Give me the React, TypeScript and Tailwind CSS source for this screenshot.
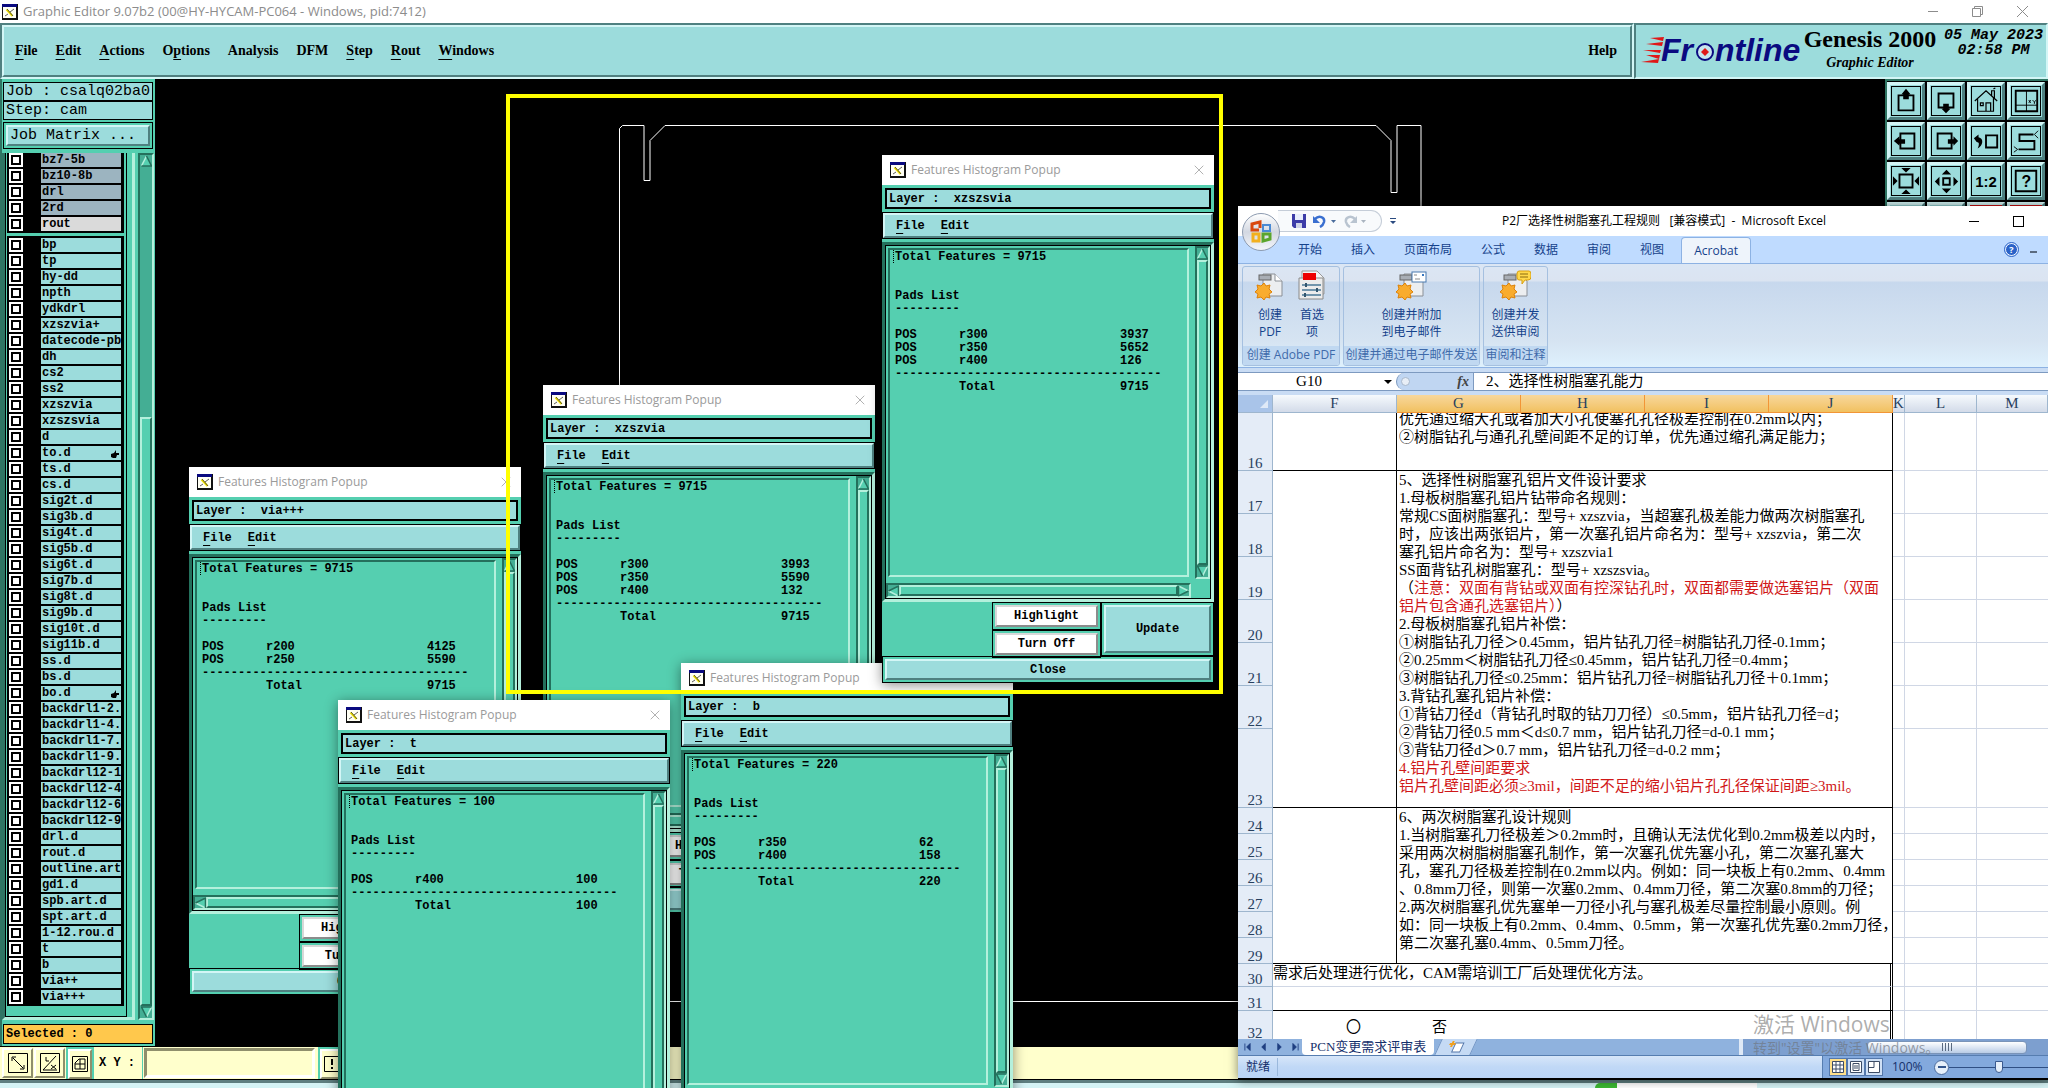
import React, { useState } from 'react';
import clsx from 'clsx';
import { X } from 'lucide-react';

const MONO = "font-['Liberation_Mono',monospace]";
const UI = "font-['Open_Sans','Noto_Sans_CJK_SC',sans-serif]";
const SHEET = "font-['Liberation_Serif','Noto_Sans_CJK_SC',serif]";

// Motif style bevels
const RAISED = 'border-2 border-t-[#d3f6f6] border-l-[#d3f6f6] border-b-[#4f8080] border-r-[#4f8080]';
const SUNKEN = 'border-2 border-t-[#4f8080] border-l-[#4f8080] border-b-[#d3f6f6] border-r-[#d3f6f6]';
const GREEN_RAISED = 'border-2 border-t-[#b4f0dc] border-l-[#b4f0dc] border-b-[#24705c] border-r-[#24705c]';
const GREEN_SUNKEN = 'border-2 border-t-[#24705c] border-l-[#24705c] border-b-[#b4f0dc] border-r-[#b4f0dc]';

const mainMenu = [
  ['File', 0], ['Edit', 0], ['Actions', 0], ['Options', 1], ['Analysis', -1],
  ['DFM', -1], ['Step', 0], ['Rout', 0], ['Windows', 0],
] as [string, number][];

const drillLayers = ['bz7-5b', 'bz10-8b', 'drl', '2rd', 'rout'];
const layers = [
  'bp', 'tp', 'hy-dd', 'npth', 'ydkdrl', 'xzszvia+', 'datecode-pbd', 'dh', 'cs2', 'ss2', 'xzszvia', 'xzszsvia',
  'd', 'to.d', 'ts.d', 'cs.d', 'sig2t.d', 'sig3b.d', 'sig4t.d', 'sig5b.d', 'sig6t.d', 'sig7b.d', 'sig8t.d',
  'sig9b.d', 'sig10t.d', 'sig11b.d', 'ss.d', 'bs.d', 'bo.d', 'backdrl1-2.d', 'backdrl1-4.d', 'backdrl1-7.d',
  'backdrl1-9.d', 'backdrl12-11', 'backdrl12-4', 'backdrl12-6', 'backdrl12-9', 'drl.d', 'rout.d', 'outline.art',
  'gd1.d', 'spb.art.d', 'spt.art.d', '1-12.rou.d', 't', 'b', 'via++', 'via+++',
];

interface PopupData {
  layer: string;
  total: number;
  pads: [string, number][];
  place: string;
}

const popups: PopupData[] = [
  { layer: 'via+++', total: 9715, pads: [['r200', 4125], ['r250', 5590]], place: 'left-[189px] top-[467px]' },
  { layer: 'xzszvia', total: 9715, pads: [['r300', 3993], ['r350', 5590], ['r400', 132]], place: 'left-[543px] top-[385px]' },
  { layer: 'b', total: 220, pads: [['r350', 62], ['r400', 158]], place: 'left-[681px] top-[663px]' },
  { layer: 'xzszsvia', total: 9715, pads: [['r300', 3937], ['r350', 5652], ['r400', 126]], place: 'left-[882px] top-[155px]' },
  { layer: 't', total: 100, pads: [['r400', 100]], place: 'left-[338px] top-[700px]' },
];

function MenuLabel({ text, mark }: { text: string; mark: number }) {
  if (mark < 0) return <>{text}</>;
  return (
    <>
      {text.slice(0, mark)}
      <span className="underline underline-offset-4 decoration-1">{text[mark]}</span>
      {text.slice(mark + 1)}
    </>
  );
}

function AppIcon() {
  return (
    <svg className="w-4 h-4 shrink-0" viewBox="0 0 16 16">
      <rect width="16" height="16" fill="#111" />
      <rect x="0" y="0" width="15" height="3" fill="#0a0a80" />
      <rect x="1" y="3" width="13" height="11" fill="#fffff4" />
      <path d="M4.500 5.500l6 6.500" stroke="#f0e000" strokeWidth="2" />
      <path d="M3 12l3-2M8 8l4-3M5 5l6 7" stroke="#333" strokeWidth=".8" fill="none" />
    </svg>
  );
}

function Arrow({ dir }: { dir: 'up' | 'down' | 'left' | 'right' }) {
  const rot = { up: 'rotate-0', down: 'rotate-180', left: '-rotate-90', right: 'rotate-90' }[dir];
  return (
    <svg className={clsx('w-[11px] h-3 shrink-0 block', rot)} viewBox="0 0 11 12">
      <path d="M5.5 1L10.5 11H.5z" fill="#55cfb0" />
      <path d="M5.5 1L.5 11" stroke="#b4f0dc" strokeWidth="1.5" />
      <path d="M5.5 1l5 10H.5" stroke="#24705c" strokeWidth="1.5" fill="none" />
    </svg>
  );
}

function HistogramPopup({ data }: { data: PopupData }) {
  return (
    <section className={clsx('absolute w-[332px] h-[528px] bg-[#55cfb0] shadow-[0_2px_12px_rgba(0,0,0,0.45)]', data.place)}>
      <div className={clsx('h-[30px] bg-white flex items-center pl-2 pr-[7px]', UI)}>
        <AppIcon />
        <h2 className="ml-[5px] text-[12px] text-[#9a9a9a] flex-1">Features Histogram Popup</h2>
        <button aria-label="Close window"><X className="w-4 h-4 text-[#8a8a8a]" strokeWidth={1} /></button>
      </div>
      <div className={clsx('pt-[3px] font-bold text-[12px] text-black', MONO)}>
        <div className="mx-[3px] h-[21px] border-2 border-black bg-[#9cdcdc] pl-[2px] leading-[19px] whitespace-pre">
          {`Layer :  ${data.layer}`}
        </div>
        <div className="mt-[3px] h-[27px] border border-black">
          <div className={clsx('h-full bg-[#9cdcdc] flex items-center gap-4 pl-[11px]', RAISED)}>
            <button><MenuLabel text="File" mark={0} /></button>
            <button><MenuLabel text="Edit" mark={0} /></button>
          </div>
        </div>
        <div className="mt-[3px] h-[360px] border-[3px] border-t-[#24705c] border-l-[#24705c] border-b-[#b4f0dc] border-r-[#b4f0dc]">
          <div className="h-full border border-black grid grid-cols-[305px_15px] grid-rows-[333px_15px] gap-1">
            <div className={clsx('m-[2px] leading-[13px] relative pt-px pl-[5px]', GREEN_SUNKEN)}>
              <span className="absolute left-[3px] top-0 h-[13px] border-l border-dotted border-black" />
              <p>Total Features = {data.total}</p>
              <p className="mt-[26px]">Pads List</p>
              <p>---------</p>
              <table className="mt-[13px] table-fixed w-[265px] text-left">
                <colgroup>
                  <col className="w-16" />
                  <col className="w-[161px]" />
                  <col />
                </colgroup>
                <tbody>
                  {data.pads.map(([name, count]) => (
                    <tr key={name}>
                      <td className="p-0">POS</td>
                      <td className="p-0">{name}</td>
                      <td className="p-0">{count}</td>
                    </tr>
                  ))}
                  <tr>
                    <td colSpan={3} className="p-0 whitespace-nowrap">{'-'.repeat(37)}</td>
                  </tr>
                  <tr>
                    <td className="p-0" />
                    <td className="p-0">Total</td>
                    <td className="p-0">{data.total}</td>
                  </tr>
                </tbody>
              </table>
            </div>
            <div className={clsx('bg-[#44ae94] flex flex-col items-center', GREEN_SUNKEN)}>
              <Arrow dir="up" />
              <div className={clsx('flex-1 w-full bg-[#55cfb0]', GREEN_RAISED)} />
              <Arrow dir="down" />
            </div>
            <div className={clsx('bg-[#44ae94] flex items-center', GREEN_SUNKEN)}>
              <Arrow dir="left" />
              <div className={clsx('flex-1 h-full bg-[#55cfb0]', GREEN_RAISED)} />
              <Arrow dir="right" />
            </div>
          </div>
        </div>
        <div className="h-[54px] flex justify-end">
          <div className="w-[109px] flex flex-col">
            {['Highlight', 'Turn Off'].map(label => (
              <div key={label} className="flex-1 border border-black p-[2px]">
                <button className="w-full h-full block bg-white border-2 border-t-[#d8d8d8] border-l-[#d8d8d8] border-b-[#8c8c8c] border-r-[#8c8c8c]">
                  {label}
                </button>
              </div>
            ))}
          </div>
          <div className="w-[113px] border border-black p-[2px]">
            <button className={clsx('w-full h-full block bg-[#9cdcdc]', RAISED)}>Update</button>
          </div>
        </div>
        <div className="h-[27px] border border-black p-[2px]">
          <button className={clsx('w-full h-full block bg-[#9cdcdc]', RAISED)}>Close</button>
        </div>
      </div>
    </section>
  );
}

function LayerRow({ name, tone }: { name: string; tone: string }) {
  return (
    <li className="h-4 flex items-start">
      <input type="checkbox" id={`ly-${name}`} aria-label={name}
        className="appearance-none w-[14px] h-[14px] m-0 bg-white outline-2 outline-black -outline-offset-4 shrink-0" />
      <label htmlFor={`ly-${name}`}
        className={clsx('ml-[18px] w-20 h-[14px] pl-px leading-[14px] overflow-hidden whitespace-nowrap flex justify-between', tone)}>
        <span>{name}</span>
        {(name === 'to.d' || name === 'bo.d') && (
          <svg className="w-2 h-2 mt-1 mr-[2px] shrink-0" viewBox="0 0 8 8">
            <path d="M0 4l3-1 2-3v3h3v2H6l-1 3H2L0 7z" fill="#000" />
          </svg>
        )}
      </label>
    </li>
  );
}

function Sidebar() {
  return (
    <aside className={clsx('w-[155px] shrink-0 bg-[#55cfb0] border-l-2 border-[#2f7563] pt-[3px] pr-px flex flex-col text-black', MONO)}>
      <div className="mx-px text-[15px]">
        <div className="h-[19px] border border-black bg-[#9cdcdc] pl-[2px] leading-[18px] whitespace-nowrap">Job : csalq02ba0</div>
        <div className="h-[19px] border border-black bg-[#9cdcdc] pl-[2px] leading-[18px]">Step: cam</div>
        <div className="mt-[2px] h-[27px] border border-black p-[2px]">
          <button className={clsx('w-full h-full bg-[#9cdcdc] block text-left pl-[2px] leading-[18px]', RAISED)}>Job Matrix ...</button>
        </div>
      </div>
      <div className="mt-1 flex-1 flex min-h-0 text-[12px] font-bold">
        <div className="flex-1 min-w-0 border-[3px] border-l-[#2f7563] border-b-[#b4f0dc] border-r-[#b4f0dc] border-t-0 flex">
          <div className="w-[122px] border border-t-0 border-black pl-px">
            <ul className="w-[117px] bg-black pl-[2px] h-20 overflow-hidden">
              {drillLayers.map(n => <LayerRow key={n} name={n} tone={n === 'rout' ? 'bg-[#dadada]' : 'bg-[#9cb4c0]'} />)}
            </ul>
            <ul className="mt-[3px] w-[117px] bg-black pl-[2px] pt-[2px]">
              {layers.map(n => <LayerRow key={n} name={n} tone="bg-[#9cdcdc]" />)}
            </ul>
          </div>
        </div>
        <div className={clsx('ml-[3px] w-4 bg-[#44ae94] flex flex-col items-center', GREEN_SUNKEN)}>
          <Arrow dir="up" />
          <div className="h-[250px]" />
          <div className={clsx('flex-1 w-full bg-[#55cfb0]', GREEN_RAISED)} />
          <Arrow dir="down" />
        </div>
      </div>
      <div className="mx-px mt-1 mb-[2px] h-5 border border-black bg-[#ffc84c] pl-[2px] leading-[18px] text-[12px] font-bold">Selected : 0</div>
    </aside>
  );
}

const toolIcons: { name: string; art: React.ReactNode }[] = [
  { name: 'Pan up', art: <><path d="M7 9h16v16H7z" /><path d="M15 2l-5 6h2v5h6V8h2z" fill="#000" stroke="none" /></> },
  { name: 'Pan down', art: <><path d="M7 7h16v15H7z" /><path d="M15 28l-5-5h2v-5h6v5h2z" fill="#000" stroke="none" /></> },
  { name: 'Home', art: <path strokeWidth="1.3" d="M3 15L15 4l12 11M6 13v13h17V12M21 9V4h3v8M9 17h3v3H9zM15 26v-9h5v9M23 2l2-1" /> },
  { name: 'Window XY', art: <><path d="M4 4h23v22H4z" /><path strokeWidth="1" d="M15.500 4v22M4 19.500h23M18 14l2 3m0-3l-2 3M22 14l2 2 2-2m-2 2v2" /></> },
  { name: 'Pan left', art: <><path d="M9 7h15v16H9z" /><path d="M2 15l6-5v3h6v5H8v2z" fill="#000" stroke="none" /></> },
  { name: 'Pan right', art: <><path d="M6 7h15v16H6z" /><path d="M28 15l-5-5v3h-6v5h6v2z" fill="#000" stroke="none" /></> },
  { name: 'Previous view', art: <><path d="M15 9h12v13H15z" /><path d="M2 12l5-4v3c6 1 5 9-1 12 2-4 2-7-1-7z" fill="#000" stroke="none" /></> },
  { name: 'Snap path', art: <><path d="M23 8H8v7h16v9H7" /><path strokeWidth="1" d="M24 8l4-4M24 8l4 4M6 24l-4-3M6 24l-4 3" /></> },
  { name: 'Zoom in', art: <><path d="M8 8h14v14H8z" /><path d="M10 1h10l-5 5zM10 29h10l-5-5zM1 10v10l5-5zM29 10v10l-5-5z" fill="#000" stroke="none" /></> },
  { name: 'Zoom out', art: <><path d="M12 12h7v7h-7z" /><path d="M15.500 3l5 5h-10zM15.500 28l5-5h-10zM3 15.500l5-5v10zM28 15.500l-5-5v10z" fill="#000" stroke="none" /></> },
  { name: 'Scale', art: <text x="15" y="21" textAnchor="middle" fontSize="16" fontWeight="bold" fill="#000" stroke="none" fontFamily="Liberation Sans">1:2</text> },
  { name: 'Help mode', art: <><path d="M4 4h22v22H4z" /><text x="15.500" y="21" textAnchor="middle" fontSize="17" fontWeight="bold" fill="#000" stroke="none" fontFamily="Liberation Sans">?</text></> },
  { name: 'Layer A', art: null },
  { name: 'Layer B', art: null },
  { name: 'Stop', art: null },
  { name: 'Cancel', art: null },
];

function ToolPalette() {
  return (
    <div className="w-[163px] shrink-0 self-start bg-black border-l-2 border-t-2 border-[#2f7563] pt-px grid grid-cols-[repeat(4,38px)] gap-x-[2px] gap-y-[2px]">
      {toolIcons.map((t, i) => (
        <button key={t.name} aria-label={t.name}
          className={clsx('h-[38px] p-px border-[3px] border-t-[#d3f6f6] border-l-[#d3f6f6] border-b-[#4f8080] border-r-[#4f8080]', i > 13 ? 'bg-[#d01010]' : 'bg-[#9cdcdc]')}>
          <svg className="w-[30px] h-[30px] block border border-black" viewBox="0 0 30 30" fill="none" stroke="#000" strokeWidth="2">{t.art}</svg>
        </button>
      ))}
    </div>
  );
}

function FrontlineLogo() {
  return (
    <svg className="w-[162px] h-9 shrink-0" viewBox="0 0 162 36">
      <g fill="#e01818">
        <path d="M9 5l14-1-1 4zM5 11l17-2-1 4zM2 17h18l-1 3zM5 22h14l-1 4zM0 29l18-3-1 4z" />
      </g>
      <g fill="#0a0a80" fontFamily="Liberation Sans, sans-serif" fontWeight="bold" fontStyle="italic" fontSize="32">
        <text x="20" y="28">Fr</text>
        <text x="74" y="28">ntline</text>
      </g>
      <circle cx="64" cy="19" r="8" fill="#c8e6ee" stroke="#0a0a80" strokeWidth="2" />
      <path d="M64 15l4 4-4 4-4-4z" fill="#e01818" />
    </svg>
  );
}

function PdfIcon({ kind }: { kind: 'create' | 'prefs' | 'mail' | 'review' }) {
  if (kind === 'prefs') {
    return (
      <svg className="w-8 h-8" viewBox="0 0 32 32">
        <path d="M6 1h15l7 7v16H6z" fill="#f4f4f4" stroke="#999" />
        <path d="M3 8h24v21H3z" fill="#ececec" stroke="#8a8a8a" />
        <rect x="7" y="3" width="13" height="7" fill="#ee0000" />
        <path d="M6 15h19M6 20h19M6 25h19" stroke="#4a7896" strokeWidth="1.500" />
        <path d="M10 13v4M21 18v4M9 23v4" stroke="#33566e" strokeWidth="2" />
      </svg>
    );
  }
  return (
    <svg className="w-8 h-8" viewBox="0 0 32 32">
      <path d="M9 4h12l7 7v15H9z" fill="#eceef0" stroke="#8a8f96" />
      {kind === 'create' && <path d="M21 4v7h7" fill="#fff" stroke="#8a8f96" />}
      <rect x="5" y="5" width="12" height="5" fill="#a9aeb5" stroke="#666" />
      <path d="M10 13l2 3 4-1-1 4 3 3-3 2 1 4-4-1-2 3-3-3-4 1 1-4-3-2 3-3-1-4 4 1z" fill="#f9ac2e" stroke="#dd8208" />
      {kind === 'mail' && <><rect x="17" y="2" width="14" height="10" fill="#fff" stroke="#4a7ab0" /><path d="M19 5h3M20 9h5" stroke="#888" /><path d="M27 4h2v2h-2z" fill="#3a78c0" /></>}
      {kind === 'review' && <><path d="M20 1h10q2 0 2 3v3q0 3-3 3h-3l-3 4v-4h-3q-2 0-2-3V4q0-3 2-3z" fill="#ffd84a" stroke="#d9a010" /><path d="M21 4h8M21 7h8" stroke="#8a6a10" /></>}
    </svg>
  );
}

const ribbonGroups = [
  { label: '创建 Adobe PDF', width: 'w-[98px]', items: [{ kind: 'create', lines: ['创建', 'PDF'] }, { kind: 'prefs', lines: ['首选', '项'] }] },
  { label: '创建并通过电子邮件发送', width: 'w-[137px]', items: [{ kind: 'mail', lines: ['创建并附加', '到电子邮件'] }] },
  { label: '审阅和注释', width: 'w-[65px]', items: [{ kind: 'review', lines: ['创建并发', '送供审阅'] }] },
] as const;

// a bar switches between black and red text
const section5 = [
  '5、选择性树脂塞孔铝片文件设计要求',
  '1.母板树脂塞孔铝片钻带命名规则：',
  '常规CS面树脂塞孔：型号+ xzszvia，当超塞孔极差能力做两次树脂塞孔',
  '时，应该出两张铝片，第一次塞孔铝片命名为：型号+ xzszvia，第二次',
  '塞孔铝片命名为：型号+ xzszvia1',
  'SS面背钻孔树脂塞孔：型号+ xzszsvia。',
  '（|注意：双面有背钻或双面有控深钻孔时，双面都需要做选塞铝片（双面',
  '|铝片包含通孔选塞铝片）|）',
  '2.母板树脂塞孔铝片补偿：',
  '①树脂钻孔刀径＞0.45mm，铝片钻孔刀径=树脂钻孔刀径-0.1mm；',
  '②0.25mm＜树脂钻孔刀径≤0.45mm，铝片钻孔刀径=0.4mm；',
  '③树脂钻孔刀径≤0.25mm：铝片钻孔刀径=树脂钻孔刀径＋0.1mm；',
  '3.背钻孔塞孔铝片补偿：',
  '①背钻刀径d（背钻孔时取的钻刀刀径）≤0.5mm，铝片钻孔刀径=d；',
  '②背钻刀径0.5 mm＜d≤0.7 mm，铝片钻孔刀径=d-0.1 mm；',
  '③背钻刀径d＞0.7 mm，铝片钻孔刀径=d-0.2 mm；',
  '|4.铝片孔壁间距要求',
  '|铝片孔壁间距必须≥3mil，间距不足的缩小铝片孔孔径保证间距≥3mil。',
];

const section6 = [
  '6、两次树脂塞孔设计规则',
  '1.当树脂塞孔刀径极差＞0.2mm时，且确认无法优化到0.2mm极差以内时，',
  '采用两次树脂树脂塞孔制作，第一次塞孔优先塞小孔，第二次塞孔塞大',
  '孔，塞孔刀径极差控制在0.2mm以内。例如：同一块板上有0.2mm、0.4mm',
  '、0.8mm刀径，则第一次塞0.2mm、0.4mm刀径，第二次塞0.8mm的刀径；',
  '2.两次树脂塞孔优先塞单一刀径小孔与塞孔极差尽量控制最小原则。例',
  '如：同一块板上有0.2mm、0.4mm、0.5mm，第一次塞孔优先塞0.2mm刀径，',
  '第二次塞孔塞0.4mm、0.5mm刀径。',
];

function Lines({ lines }: { lines: string[] }) {
  return (
    <div className="pl-[2px]">
      {lines.map(l => (
        <p key={l} className="whitespace-nowrap">
          {l.split('|').map((part, i) => (i % 2 ? <span key={i} className="text-[#d01818]">{part}</span> : part))}
        </p>
      ))}
    </div>
  );
}

const rowHeights: Record<number, string> = { 16: 'h-[58px]', 23: 'h-[79px]', 30: 'h-[23px]', 31: 'h-6', 32: 'h-[30px]' };

function Sheet() {
  const rows = Array.from({ length: 17 }, (_, i) => i + 16);
  const black = 'border-black border-r border-b p-0 align-top bg-white';
  return (
    <table className={clsx('table-fixed w-full border-separate border-spacing-0 text-[15px] leading-[18px] text-black bg-white', SHEET)}>
      <colgroup>
        <col className="w-[35px]" />
        {[0, 1, 2, 3, 4].map(i => <col key={i} className="w-[124px]" />)}
        <col className="w-3" />
        <col className="w-[72px]" />
        <col />
      </colgroup>
      <thead>
        <tr className="h-[18px] text-[#27405e]">
          <th className="p-0 bg-[#a9c4e9] border-r border-b border-[#9eb6ce]">
            <svg className="w-2 h-2 ml-auto mr-1" viewBox="0 0 8 8"><path d="M8 0v8H0z" fill="#dfe9f7" /></svg>
          </th>
          {['F', 'G', 'H', 'I', 'J', 'K', 'L', 'M'].map(c => (
            <th key={c} className={clsx('p-0 font-normal border-r border-b leading-[17px]',
              'GHIJ'.includes(c) ? 'bg-linear-to-b from-[#f8d79b] to-[#f1c15f] border-[#f29536]' : 'bg-linear-to-b from-[#f6fafd] to-[#d3dbe9] border-[#9eb6ce]')}>
              {c}
            </th>
          ))}
        </tr>
      </thead>
      <tbody>
        {rows.map(n => {
          const h = rowHeights[n] ?? (n < 23 ? 'h-[43px]' : 'h-[26px]');
          return (
            <tr key={n} className={h}>
              <th className="p-0 align-bottom font-normal bg-[#e4ecf7] text-[#27405e] border-r border-b border-[#9eb6ce] leading-[14px]">{n}</th>
              {n === 16 && (
                <>
                  <td className={black} />
                  <td colSpan={4} className={black}>
                    <div className="h-[57px] overflow-hidden flex flex-col justify-end pb-6 pl-[2px] whitespace-nowrap">
                      <p>优先通过缩大孔或者加大小孔使塞孔孔径极差控制在0.2mm以内；</p>
                      <p>②树脂钻孔与通孔孔壁间距不足的订单，优先通过缩孔满足能力；</p>
                    </div>
                  </td>
                </>
              )}
              {n === 17 && <><td rowSpan={7} className={black} /><td rowSpan={7} colSpan={4} className={black}><Lines lines={section5} /></td></>}
              {n === 24 && <><td rowSpan={6} className={black} /><td rowSpan={6} colSpan={4} className={black}><Lines lines={section6} /></td></>}
              {n === 30 && <td colSpan={5} className="p-0 align-top whitespace-nowrap border-b border-b-[#d0d7e5] border-r-3 border-r-black [border-right-style:double]">需求后处理进行优化，CAM需培训工厂后处理优化方法。</td>}
              {n === 31 && <td colSpan={5} className="border-b border-b-black border-r-3 border-r-black [border-right-style:double]" />}
              {n === 32 && (
                <td colSpan={5} className="p-0 border-b border-b-black border-r-3 border-r-black [border-right-style:double]">
                  <div className="flex items-center pl-[73px] font-['Noto_Sans_CJK_SC',sans-serif]"><span className="w-[86px]">〇</span><span>否</span></div>
                </td>
              )}
              <td className="border-r border-b border-[#d0d7e5]" />
              <td className="border-r border-b border-[#d0d7e5]" />
              <td className="border-b border-[#d0d7e5]" />
            </tr>
          );
        })}
      </tbody>
    </table>
  );
}

function ExcelWindow() {
  const [formula, setFormula] = useState('2、选择性树脂塞孔能力');
  const [cell, setCell] = useState('G10');
  const [zoom, setZoom] = useState(50);

  return (
    <section className={clsx('absolute left-[1238px] right-0 top-[206px] h-[874px] bg-[#bfdbff] flex flex-col border-b-2 border-black text-[12px] shadow-[0_0_10px_rgba(0,0,0,0.5)]', UI)}>
      {/* Title bar */}
      <div className="h-[30px] bg-white flex items-center shrink-0">
        <div className="ml-10 w-[104px] h-[22px] border border-l-0 border-[#c5cdd8] rounded-r-full bg-[#f8fafc] flex items-center pl-[14px] gap-[7px]">
          <button aria-label="保存">
            <svg className="w-[14px] h-[14px]" viewBox="0 0 14 14"><path d="M0 0h14v14H2l-2-2z" fill="#3c3ca8" /><path d="M3 0h8v6H3z" fill="#e8eefc" /><path d="M4 9h6v5H4z" fill="#cfd4e8" /></svg>
          </button>
          <button aria-label="撤消" className="flex items-center gap-1">
            <svg className="w-[14px] h-[14px]" viewBox="0 0 14 14"><path d="M2 5c4-4 10-2 9 3-.500 2-2 4-4 5" stroke="#3a6fd0" strokeWidth="2.500" fill="none" /><path d="M0 2v7h7z" fill="#3a6fd0" /></svg>
            <svg className="w-[5px] h-[3px]" viewBox="0 0 5 3"><path d="M0 0h5L2.500 3z" fill="#4a6c9c" /></svg>
          </button>
          <button aria-label="恢复" className="flex items-center gap-1">
            <svg className="w-[14px] h-[14px]" viewBox="0 0 14 14"><path d="M12 5C8 1 2 3 3 8c.500 2 2 4 4 5" stroke="#b9c4d0" strokeWidth="2.500" fill="none" /><path d="M14 2v7H7z" fill="#b9c4d0" /></svg>
            <svg className="w-[5px] h-[3px]" viewBox="0 0 5 3"><path d="M0 0h5L2.500 3z" fill="#aab4c0" /></svg>
          </button>
        </div>
        <button aria-label="自定义快速访问工具栏" className="ml-2">
          <svg className="w-[6px] h-[7px]" viewBox="0 0 6 7"><path d="M0 0h6v1H0zM0 3h6L3 6z" fill="#2a4a80" /></svg>
        </button>
        <h1 className="flex-1 pl-[106px] text-black whitespace-pre">{'P2厂选择性树脂塞孔工程规则   [兼容模式]  -  Microsoft Excel'}</h1>
        <button aria-label="最小化" className="w-[10px] h-px bg-black mr-[34px]" />
        <button aria-label="最大化" className="w-[11px] h-[11px] border border-black mr-6" />
      </div>
      <button aria-label="Office 按钮" className="absolute left-1 top-[7px] w-[38px] h-[38px] rounded-full border border-[#8d9bb0] bg-linear-to-b from-white via-[#d3d8e2] to-[#f4f6fa] flex items-center justify-center">
        <svg className="w-6 h-6" viewBox="0 0 24 24" fill="none" strokeWidth="3">
          <path d="M10 10H3V4l8-2v6" stroke="#d9480f" />
          <path d="M14 5h7v6h-7z" stroke="#4a8ad4" strokeWidth="2" />
          <path d="M10 14H4v7h6z" stroke="#f2b01e" />
          <path d="M14 14h7v5l-7 2z" stroke="#5aa52c" />
        </svg>
      </button>

      {/* Tabs */}
      <nav className="h-[27px] shrink-0 flex items-stretch gap-px pl-[46px] text-[#15428b]">
        {['开始', '插入', '页面布局', '公式', '数据', '审阅', '视图'].map(t => <button key={t} className="px-[14px] text-[12px]">{t}</button>)}
        <button className="ml-[2px] w-[70px] mt-px rounded-t border border-b-0 border-[#8db2e3] bg-[#eef4fb] text-[12px]">Acrobat</button>
        <div className="ml-auto mr-[11px] flex items-center gap-3">
          <button aria-label="帮助" className="w-[13px] h-[13px] rounded-full bg-[#2a62c8] border border-white outline outline-[#2a62c8] text-white text-[9px] leading-[10px] font-bold">?</button>
          <button aria-label="最小化工作簿" className="w-[7px] h-[2px] bg-[#5a6a80] mt-1" />
        </div>
      </nav>

      {/* Ribbon */}
      <div className="h-[105px] shrink-0 border-t border-b border-[#8db2e3] bg-[linear-gradient(#dbe6f4_0%,#dbe4f1_16%,#c7d8ed_18%,#d6e4f2_75%,#def1fd_100%)] flex pl-1 pt-[2px] gap-[3px]">
        {ribbonGroups.map(g => (
          <div key={g.label} className={clsx('h-[100px] border border-[#a5c0e0] rounded-[3px] flex flex-col overflow-hidden', g.width)}>
            <div className="flex-1 flex justify-center gap-[10px] pt-[3px] text-[#15428b]">
              {g.items.map(it => (
                <button key={it.kind} className="flex flex-col items-center leading-[17px]">
                  <PdfIcon kind={it.kind} />
                  <span className="mt-1">{it.lines[0]}</span>
                  <span>{it.lines[1]}</span>
                </button>
              ))}
            </div>
            <div className="h-[19px] bg-[#c0d8f1] text-[#3e6aaa] text-center leading-[18px] whitespace-nowrap">{g.label}</div>
          </div>
        ))}
      </div>

      {/* Formula bar */}
      <div className="h-[27px] shrink-0 pt-1 pb-1 bg-[#c9dcf4] flex">
        <div className={clsx('flex-1 flex border-t border-b border-[#7d9ac0] bg-white text-black', SHEET)}>
          <input aria-label="名称框" value={cell} onChange={e => setCell(e.target.value)} className="w-[142px] text-center text-[15px] outline-none" />
          <button aria-label="名称列表" className="w-4 flex items-center justify-center">
            <svg className="w-2 h-1" viewBox="0 0 8 4"><path d="M0 0h8L4 4z" fill="#000" /></svg>
          </button>
          <div className="w-[78px] bg-[#c0d6f2] rounded-l-full border-r border-l border-[#7d9ac0] flex items-center justify-between px-1">
            <span className="w-[9px] h-[9px] rounded-full bg-[#e8eef6] border border-[#a8b8cc]" />
            <span className="italic text-[14px] font-bold text-[#444]">fx</span>
          </div>
          <input aria-label="编辑栏" value={formula} onChange={e => setFormula(e.target.value)} className="flex-1 pl-3 text-[15px] leading-[17px] outline-none" />
        </div>
      </div>

      <div className="flex-1 min-h-0 overflow-hidden"><Sheet /></div>

      {/* Sheet tabs */}
      <div className="h-4 shrink-0 bg-[#8fb2de] flex items-center">
        <div className="flex items-center gap-[9px] pl-[6px] w-[64px]">
          {['M1 0v8M7 0L3 4l4 4z', 'M6 0L2 4l4 4z', 'M2 0l4 4-4 4z', 'M1 0l4 4-4 4zM7 0v8'].map((d, i) => (
            <button key={d} aria-label={['第一个', '上一个', '下一个', '最后一个'][i]}>
              <svg className="w-[7px] h-2 block" viewBox="0 0 8 8"><path d={d} fill="#1f3f80" stroke="#1f3f80" /></svg>
            </button>
          ))}
        </div>
        <button className={clsx('h-full bg-white px-2 text-[13px] leading-4 text-[#15306b] whitespace-nowrap rounded-b', SHEET)}>PCN变更需求评审表</button>
        <button aria-label="插入工作表" className="h-full w-9 ml-1 bg-[#c5daf4] -skew-x-[25deg] border-r border-l border-[#6f93c4] flex items-center justify-center">
          <svg className="w-4 h-3" viewBox="0 0 16 12"><path d="M6 2h8v9H6z" fill="#fff" stroke="#5577aa" /><path d="M3 0v6M0 3h6" stroke="#f0a020" strokeWidth="2" /></svg>
        </button>
        <div className="ml-auto w-[309px] h-full bg-[#7d9fcf] border-l-4 border-[#dfe9f6] flex items-center">
          <div className="ml-[124px] w-40 h-[13px] rounded-sm border border-[#7a94b8] bg-linear-to-b from-white to-[#b9cce6] flex items-center justify-center gap-[2px]">
            {[0, 1, 2, 3].map(i => <i key={i} className="w-px h-2 bg-[#5a6a80]" />)}
          </div>
        </div>
      </div>

      {/* Status bar */}
      <div className="h-[23px] shrink-0 flex items-center border-t border-[#567db0] bg-linear-to-b from-[#d7e6f9] via-[#c0d8f6] to-[#bad4f7] text-[#15306b]">
        <span className="pl-2 w-10 border-r border-[#9ab8dc]">就绪</span>
        <div className="ml-auto w-[226px] h-full bg-[#83a9dd] border-l border-[#567db0] flex items-center pl-[6px]">
          {[0, 1, 2].map(i => (
            <button key={i} aria-label={['普通', '页面布局', '分页预览'][i]} className={clsx('w-[18px] h-[18px] border border-[#5478ac] flex items-center justify-center', i === 0 ? 'bg-[#ffe08a]' : 'bg-[#cfe0f5]')}>
              <svg className="w-3 h-3" viewBox="0 0 12 12" fill="#fff" stroke="#3c4c66">
                <path d={['M.5.5h11v11H.5zM4 .5v11M8 .5v11M.5 4h11M.5 8h11', 'M.5.5h11v11H.5zM3 2.500h6v7H3zM4 5h4M4 7h4', 'M.5.5h11v11H.5zM6 .5v6M.5 6.500h5.500'][i]} />
              </svg>
            </button>
          ))}
          <button className="ml-[9px] w-9 text-left">100%</button>
          <button aria-label="缩小" className="ml-[6px] w-[15px] h-[15px] rounded-full border border-[#4a6a9c] bg-[#e6effa] flex items-center justify-center"><i className="w-2 h-[2px] bg-[#33558c]" /></button>
          <input type="range" aria-label="显示比例" min={0} max={100} value={zoom} onChange={e => setZoom(Number(e.target.value))}
            className="appearance-none flex-1 min-w-0 h-px bg-[#2f4f84] [&::-webkit-slider-thumb]:appearance-none [&::-webkit-slider-thumb]:w-2 [&::-webkit-slider-thumb]:h-3 [&::-webkit-slider-thumb]:rounded-b-full [&::-webkit-slider-thumb]:border [&::-webkit-slider-thumb]:border-[#3a5a90] [&::-webkit-slider-thumb]:bg-[#e6effa]" />
        </div>
      </div>

      {/* Activation notice */}
      <div className="absolute right-[103px] bottom-[21px] w-[192px] text-[#8a8a8a]/70 pointer-events-none whitespace-nowrap">
        <p className="text-[21px] leading-[30px]">激活 Windows</p>
        <p className="text-[14px] leading-[18px] text-[#6f7782]/70">转到"设置"以激活 Windows。</p>
      </div>
    </section>
  );
}

function CommandBar() {
  const iconBtn = 'h-[30px] border-2 border-t-white border-l-white border-b-[#8f8f6c] border-r-[#8f8f6c] bg-[#ffffcc] flex items-center justify-center';
  return (
    <div className="h-[34px] shrink-0 bg-[#ffffcc] border-y border-black flex items-center pl-[2px] gap-px text-black">
      <button aria-label="Measure" className={clsx(iconBtn, 'w-[31px]')}>
        <svg className="w-5 h-5" viewBox="0 0 20 20" fill="none" stroke="#000"><path d="M.5.5h19v19H.5zM5 5l10 10M4 8V4h4M16 12v4h-4" /></svg>
      </button>
      <button aria-label="Angle" className={clsx(iconBtn, 'w-[31px]')}>
        <svg className="w-5 h-5" viewBox="0 0 20 20" fill="none" stroke="#000"><path d="M.5.5h19v19H.5zM3 17L16 3M3 17h14M6 4v4h3M11 12l5 4M16 12l-5 4" /></svg>
      </button>
      <div className="h-8 bg-[#55cfb0] p-[2px]">
        <button aria-label="Grid" className={clsx(iconBtn, 'w-6 h-7')}>
          <svg className="w-4 h-4 shrink-0" viewBox="0 0 16 16" fill="none" stroke="#000"><path d="M.5.5h15v15H.5zM8 3v10M3 8h10M3 13V7l4-4h6v10z" /></svg>
        </button>
      </div>
      <label htmlFor="xy" className={clsx('w-12 pl-1 text-[12px] font-bold border-r border-[#55cfb0] leading-8 whitespace-nowrap', MONO)}>X Y :</label>
      <input id="xy" className="w-[171px] h-[30px] bg-[#ffffcc] border-[3px] border-t-[#8f8f6c] border-l-[#8f8f6c] border-b-white border-r-white outline-none" />
      <div className="h-8 ml-[2px] bg-[#55cfb0] p-[2px]">
        <button aria-label="Alert" className={clsx(iconBtn, 'w-6 h-7')}>
          <svg className="w-4 h-4 shrink-0" viewBox="0 0 16 16" fill="none" stroke="#000"><path d="M.5.5h15v15H.5z" /><path d="M8 3v6M8 11v2" strokeWidth="2" /></svg>
        </button>
      </div>
    </div>
  );
}

export default function App() {
  return (
    <div className="relative h-screen min-h-[1088px] overflow-hidden bg-black flex flex-col">
      <div className={clsx('h-[23px] shrink-0 bg-white flex items-center pl-[2px] text-[13px] text-[#8c8c8c]', UI)}>
        <AppIcon />
        <span className="ml-[5px] flex-1">Graphic Editor 9.07b2 (00@HY-HYCAM-PC064 - Windows, pid:7412)</span>
        <div className="flex items-center gap-[34px] mr-5">
          <button aria-label="Minimize" className="w-[10px] h-px bg-[#8c8c8c]" />
          <button aria-label="Restore">
            <svg className="w-[11px] h-[11px] block" viewBox="0 0 11 11" fill="none" stroke="#8c8c8c"><path d="M.5 2.500h8v8h-8zM2.500 2.500v-2h8v8h-2" /></svg>
          </button>
          <button aria-label="Close">
            <svg className="w-[11px] h-[11px] block" viewBox="0 0 11 11" stroke="#8c8c8c"><path d="M0 0l11 11M11 0L0 11" /></svg>
          </button>
        </div>
      </div>

      {/* Menu bar and product banner */}
      <header className="h-14 shrink-0 flex bg-[#9cdcdc] text-black font-['Liberation_Serif',serif]">
        <div className={clsx('flex-1', SUNKEN)}>
          <div className={clsx('h-full flex items-center gap-[18px] pb-[2px] pl-[11px] pr-[13px] text-[14px] font-bold', RAISED)}>
            {mainMenu.map(([text, mark]) => <button key={text}><MenuLabel text={text} mark={mark} /></button>)}
            <button className="ml-auto">Help</button>
          </div>
        </div>
        <div className={clsx('w-[414px] flex items-center pl-[5px]', SUNKEN)}>
          <FrontlineLogo />
          <div className="w-[134px] text-center whitespace-nowrap font-bold">
            <p className="text-[24px] leading-[24px]">Genesis 2000</p>
            <p className="text-[14px] leading-6 italic">Graphic Editor</p>
          </div>
          <div className={clsx('flex-1 self-start pt-[3px] pl-1 text-center text-[15px] leading-[15px] italic font-bold whitespace-nowrap', MONO)}>
            <p>05 May 2023</p>
            <p>02:58 PM</p>
          </div>
        </div>
      </header>

      <main className="flex-1 min-h-0 flex">
        <Sidebar />
        <div className="flex-1 relative bg-black overflow-hidden">
          {/* Panel profile */}
          <svg className="absolute left-0 top-0 w-[1730px] h-[967px]" viewBox="155 79 1730 967" fill="none" stroke="#fff" strokeWidth="1">
            <path d="M619.500 1001.500V128.500l3-3h21.500v55h6V140.500l15-15h711l15 15v52h6v-67h24v876z" />
          </svg>
        </div>
        <ToolPalette />
      </main>

      <CommandBar />
      <div className="h-2 shrink-0 bg-[#d5f3f5] border-t-3 border-[#5f7f80] flex justify-end">
        <div className="w-[22px] h-full bg-[#3cb832] rounded-tl-full" />
        <div className="w-[140px] mr-[291px] h-full bg-white" />
      </div>

      {popups.map(p => <HistogramPopup key={p.layer} data={p} />)}
      <ExcelWindow />

      <div className="absolute left-[506px] top-[94px] w-[717px] h-[600px] border-4 border-[#ffff00] pointer-events-none" />
    </div>
  );
}
